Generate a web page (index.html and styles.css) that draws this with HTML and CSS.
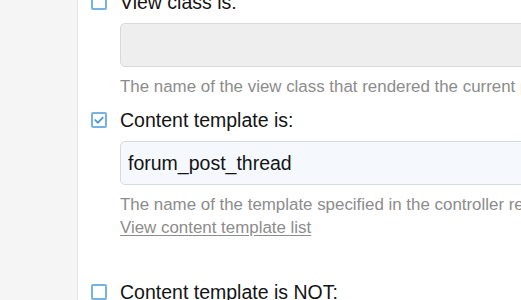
FILE: index.html
```html
<!DOCTYPE html>
<html>
<head>
<meta charset="utf-8">
<link rel="stylesheet" href="styles.css">
</head>
<body>
<div class="page">
  <div class="sidebar"></div>
  <div class="main">
    <div class="row first">
      <div class="check-line">
        <span class="box"></span>
        <span class="label">View class is:</span>
      </div>
      <div class="field">
        <div class="input disabled"></div>
        <div class="hint">The name of the view class that rendered the current page</div>
      </div>
    </div>
    <div class="row">
      <div class="check-line">
        <span class="box checked">
          <svg viewBox="0 0 16 16" width="16" height="16"><path d="M4.3 8.1 L7 10.7 L11.7 5.6" fill="none" stroke="#4f9ad8" stroke-width="1.9" stroke-linecap="round" stroke-linejoin="round"/></svg>
        </span>
        <span class="label">Content template is:</span>
      </div>
      <div class="field">
        <div class="input active">forum_post_thread</div>
        <div class="hint">The name of the template specified in the controller response<br><a class="link" href="#">View content template list</a></div>
      </div>
    </div>
    <div class="row last">
      <div class="check-line">
        <span class="box"></span>
        <span class="label">Content template is NOT:</span>
      </div>
    </div>
  </div>
</div>
</body>
</html>
```
FILE: styles.css
```css
html, body {
  margin: 0;
  padding: 0;
  height: 300px;
  overflow: hidden;
  background: #fff;
}
.page {
  display: flex;
  height: 300px;
  font-family: "Liberation Sans", Arial, sans-serif;
}
.sidebar {
  width: 77px;
  flex: none;
  background: #f5f5f5;
  border-right: 1px solid #e6e6e6;
}
.main {
  flex: none;
  width: 700px;
  background: #fff;
  padding-left: 13px;
}
.row {
  display: flex;
  flex-direction: column;
  margin-bottom: 10px;
}
.row.first {
  margin-top: -10px;
}
.row:nth-child(2) {
  margin-bottom: 41px;
}
.check-line {
  display: flex;
  align-items: flex-start;
  gap: 13px;
}
.box {
  width: 16px;
  height: 16px;
  box-sizing: border-box;
  border: 2px solid #74b3e3;
  border-radius: 2px;
  background: #fff;
  margin-top: 4px;
  flex: none;
  position: relative;
}
.box svg {
  position: absolute;
  left: -2px;
  top: -2px;
}
.label {
  font-size: 19.5px;
  line-height: 25px;
  color: #141414;
}
.field {
  padding-left: 29px;
  padding-top: 8px;
}
.input {
  height: 44px;
  box-sizing: border-box;
  border: 1px solid #d9d9d9;
  border-radius: 5px;
  padding: 0 7px;
  font-size: 19.5px;
  line-height: 42px;
  color: #141414;
  width: 620px;
}
.input.disabled {
  background: #eeeeee;
}
.input.active {
  background: #f5f9fd;
}
.hint {
  margin-top: 8px;
  font-size: 16.9px;
  line-height: 23px;
  color: #8c8c8c;
  white-space: nowrap;
}
.link {
  color: #8c8c8c;
  text-decoration: underline;
  text-underline-offset: 2px;
}
```
